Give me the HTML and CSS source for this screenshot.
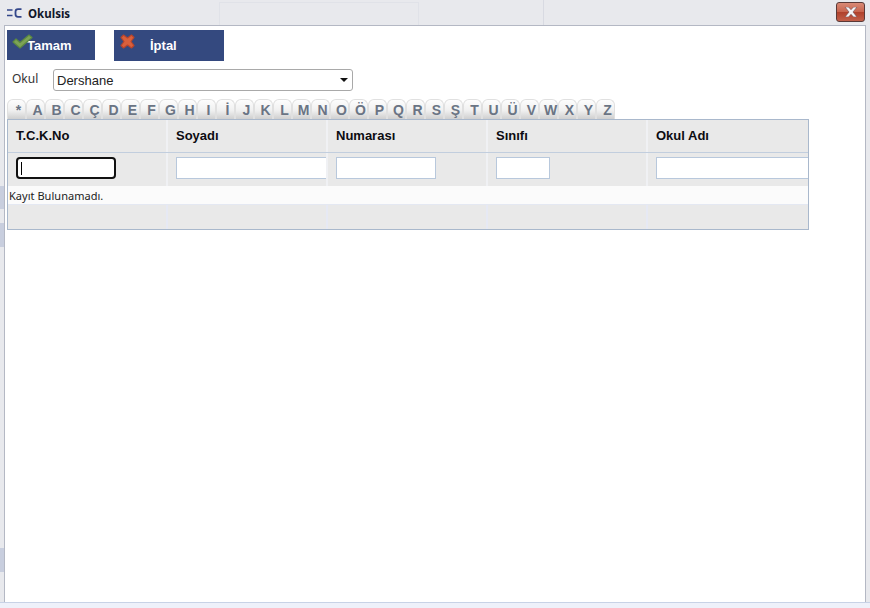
FILE: index.html
```html
<!DOCTYPE html>
<html lang="en">
<head>
    <meta charset="UTF-8">
    <meta name="viewport" content="width=device-width, initial-scale=1.0">
    <title>Okulsis</title>
    <link rel="stylesheet" href="styles.css">
</head>
<body>
    <div class="titlebar">
        <div class="bg-tab"></div>
        <div class="bg-line"></div>
        <svg class="app-icon" width="16" height="10" viewBox="0 0 16 10">
            <path d="M0 2h5.500M0 7.500h5.500" stroke="#33478a" stroke-width="1.700" fill="none"/>
            <path d="M14.500 1.200h-3.500q-2.500 0-2.500 2.500v2.600q0 2.500 2.500 2.500h3.500" stroke="#33478a" stroke-width="1.800" fill="none"/>
        </svg>
        <span class="app-title">Okulsis</span>
        <div class="close-button">
            <svg width="14" height="10" viewBox="0 0 14 10">
                <path d="M1 0h3.500l2.500 2.700 2.500-2.700h3.500l-4 5 4 5h-3.500l-2.500-2.700-2.500 2.700h-3.500l4-5z" fill="#f4f4f6" stroke="#6d4a50" stroke-width=".6"/>
            </svg>
        </div>
    </div>

    <div class="window-body">
        <div class="edge edge-left">
            <div class="edge-mark"></div>
            <div class="edge-mark mark-second"></div>
            <div class="edge-mark mark-third"></div>
        </div>
        <div class="panel">
            <div class="toolbar">
                <button class="action-button ok-button">
                    <svg class="ok-icon" width="21" height="16" viewBox="0 0 21 16">
                        <path d="M1 9l3-3 4 3.500 9-7.500 3 2.500-12 10.500z" fill="#7da356" stroke="#5c8a40" stroke-width="1.200" stroke-linejoin="round"/>
                    </svg>
                    Tamam
                </button>
                <button class="action-button cancel-button">
                    <svg class="cancel-icon" width="15" height="15" viewBox="0 0 15 15">
                        <path d="M1 3.500l2.500-2.500 4 3 4-3 2.500 2.500-3 4 3 4-2.500 2.500-4-3-4 3-2.500-2.500 3-4z" fill="#d9603c" stroke="#b8452c" stroke-width="1.200" stroke-linejoin="round"/>
                    </svg>
                    İptal
                </button>
            </div>

            <div class="school-row">
                <label class="school-label" for="schoolSelect">Okul</label>
                <div class="select-wrap">
                    <select class="school-select" id="schoolSelect">
                        <option>Dershane</option>
                    </select>
                </div>
            </div>

            <div class="letters">
                <span class="letter">*</span>
                <span class="letter">A</span>
                <span class="letter">B</span>
                <span class="letter">C</span>
                <span class="letter">Ç</span>
                <span class="letter">D</span>
                <span class="letter">E</span>
                <span class="letter">F</span>
                <span class="letter">G</span>
                <span class="letter">H</span>
                <span class="letter">I</span>
                <span class="letter">İ</span>
                <span class="letter">J</span>
                <span class="letter">K</span>
                <span class="letter">L</span>
                <span class="letter">M</span>
                <span class="letter">N</span>
                <span class="letter">O</span>
                <span class="letter">Ö</span>
                <span class="letter">P</span>
                <span class="letter">Q</span>
                <span class="letter">R</span>
                <span class="letter">S</span>
                <span class="letter">Ş</span>
                <span class="letter">T</span>
                <span class="letter">U</span>
                <span class="letter">Ü</span>
                <span class="letter">V</span>
                <span class="letter">W</span>
                <span class="letter">X</span>
                <span class="letter">Y</span>
                <span class="letter">Z</span>
            </div>

            <div class="grid">
                <div class="grid-row header-row">
                    <div class="cell">T.C.K.No</div>
                    <div class="cell">Soyadı</div>
                    <div class="cell">Numarası</div>
                    <div class="cell">Sınıfı</div>
                    <div class="cell">Okul Adı</div>
                </div>
                <div class="grid-row filter-row">
                    <div class="cell"><input type="text" class="filter-input input-focus"></div>
                    <div class="cell"><input type="text" class="filter-input input-wide"></div>
                    <div class="cell"><input type="text" class="filter-input"></div>
                    <div class="cell"><input type="text" class="filter-input input-small"></div>
                    <div class="cell"><input type="text" class="filter-input input-wide"></div>
                </div>
                <div class="empty-row">Kayıt Bulunamadı.</div>
                <div class="grid-row footer-row">
                    <div class="cell"></div>
                    <div class="cell"></div>
                    <div class="cell"></div>
                    <div class="cell"></div>
                    <div class="cell"></div>
                </div>
            </div>
        </div>
        <div class="edge"></div>
    </div>

    <div class="bottom-strip"></div>
</body>
</html>
```

FILE: styles.css
```css
* {
    box-sizing: border-box;
}

body {
    margin: 0;
    width: 870px;
    height: 608px;
    overflow: hidden;
    display: flex;
    flex-direction: column;
    font-family: 'Liberation Sans', Arial, sans-serif;
    background-color: #e8e9ed;
}

.titlebar {
    position: relative;
    height: 25px;
    flex: none;
    display: flex;
    align-items: center;
    padding: 1px 5px 0 7px;
    background-color: #e8e9ed;
}

.bg-tab {
    position: absolute;
    left: 219px;
    top: 2px;
    width: 200px;
    height: 23px;
    border: 1px solid #e0e2e8;
    border-bottom: none;
}

.bg-line {
    position: absolute;
    left: 543px;
    top: 0;
    width: 1px;
    height: 25px;
    background-color: #d8dae2;
}

.app-icon {
    margin-right: 5px;
}

.app-title {
    font-family: 'Noto Sans', sans-serif;
    font-size: 11.5px;
    font-weight: bold;
    color: #10162a;
}

.close-button {
    width: 29px;
    height: 20px;
    margin-left: auto;
    margin-top: -3px;
    display: flex;
    align-items: center;
    justify-content: center;
    border: 1px solid #5a3a38;
    border-radius: 3px;
    background: linear-gradient(#d98a76 0%, #c8654f 48%, #b0412c 52%, #c2604a 100%);
}

.window-body {
    flex: 1;
    display: flex;
    min-height: 0;
}

.edge {
    width: 4px;
    flex: none;
}

.edge-left {
    padding-top: 161px;
}

.edge-mark {
    height: 23px;
    background-color: #c8cede;
}

.mark-second {
    height: 24px;
    margin-top: 14px;
}

.mark-third {
    height: 24px;
    margin-top: 301px;
}

.panel {
    flex: 1;
    padding: 4px 0 0 2px;
    background-color: #fff;
    border: 1px solid #b4b8c4;
    border-bottom: none;
}

.toolbar {
    display: flex;
    align-items: flex-start;
    gap: 19px;
    height: 31px;
}

.action-button {
    display: flex;
    align-items: center;
    height: 30px;
    padding: 0;
    border: none;
    color: #fff;
    background-color: #34497f;
    font-family: 'Liberation Sans', Arial, sans-serif;
    font-size: 13px;
    font-weight: bold;
}

.ok-button {
    width: 88px;
    padding-left: 20px;
    position: relative;
}

.ok-icon {
    position: absolute;
    left: 5px;
    top: 3px;
}

.cancel-button {
    width: 110px;
    height: 31px;
    padding-left: 36px;
    position: relative;
}

.cancel-icon {
    position: absolute;
    left: 6px;
    top: 4px;
}

.school-row {
    display: flex;
    align-items: flex-start;
    margin-top: 8px;
    height: 30px;
}

.school-label {
    width: 46px;
    padding-left: 5px;
    padding-top: 1px;
    font-family: 'Noto Sans', sans-serif;
    font-size: 12px;
    color: #333;
}

.select-wrap {
    position: relative;
    width: 300px;
    height: 22px;
}

.select-wrap::after {
    content: '';
    position: absolute;
    right: 5px;
    top: 9px;
    border-left: 4px solid transparent;
    border-right: 4px solid transparent;
    border-top: 4px solid #111;
}

.school-select {
    appearance: none;
    width: 100%;
    height: 100%;
    padding: 0 0 0 3px;
    background-color: #fff;
    border: 1px solid #a9a9a9;
    border-radius: 3px;
    font-family: 'Liberation Sans', Arial, sans-serif;
    font-size: 13px;
    color: #222;
}

.letters {
    display: flex;
    height: 20px;
}

.letter {
    width: 19px;
    height: 20px;
    flex: none;
    text-align: center;
    padding: 3px 0 0 4px;
    font-size: 14px;
    line-height: 15px;
    font-weight: bold;
    color: #6a7484;
    background: linear-gradient(#fdfdfd 0%, #f0f0f0 55%, #cfcfcf 100%);
    border: 1px solid #e0e0e0;
    border-bottom: none;
    border-radius: 6px 6px 0 0;
}

.grid {
    width: 802px;
    height: 111px;
    background-color: #e9e9e9;
    border: 1px solid #a9b8cc;
    overflow: hidden;
}

.grid-row {
    display: grid;
    grid-template-columns: repeat(4, 160px) 1fr;
}

.cell {
    border-right: 2px solid #f0f1f4;
    min-width: 0;
    overflow: hidden;
    padding-left: 8px;
}

.cell:last-child {
    border-right: none;
}

.header-row {
    height: 33px;
    border-bottom: 1px solid #c2cede;
}

.header-row .cell {
    font-size: 13px;
    font-weight: bold;
    line-height: 32px;
    color: #0c0c12;
}

.filter-row {
    height: 33px;
}

.filter-row .cell {
    padding-top: 4px;
}

.filter-input {
    display: block;
    width: 100px;
    height: 22px;
    padding: 0 4px;
    background-color: #fff;
    border: 1px solid #b8c8dc;
    outline: none;
}

.input-focus {
    border: 2px solid #111;
    border-radius: 4px;
    background: #fff linear-gradient(#000, #000) no-repeat 3px center / 1px 13px;
}

.input-wide {
    width: 180px;
}

.input-small {
    width: 54px;
}

.empty-row {
    height: 18px;
    padding-left: 1px;
    font-family: 'Noto Sans', sans-serif;
    font-size: 11px;
    line-height: 19px;
    letter-spacing: 0.03px;
    color: #222;
    background-color: #fbfbfb;
}

.footer-row {
    height: 25px;
    border-top: 1px solid #e4e8f2;
}

.footer-row .cell {
    border-right-color: #e6e9f4;
}

.bottom-strip {
    height: 6px;
    flex: none;
    border-top: 1px solid #c8d2e6;
    background-color: #eef1fa;
}
```
